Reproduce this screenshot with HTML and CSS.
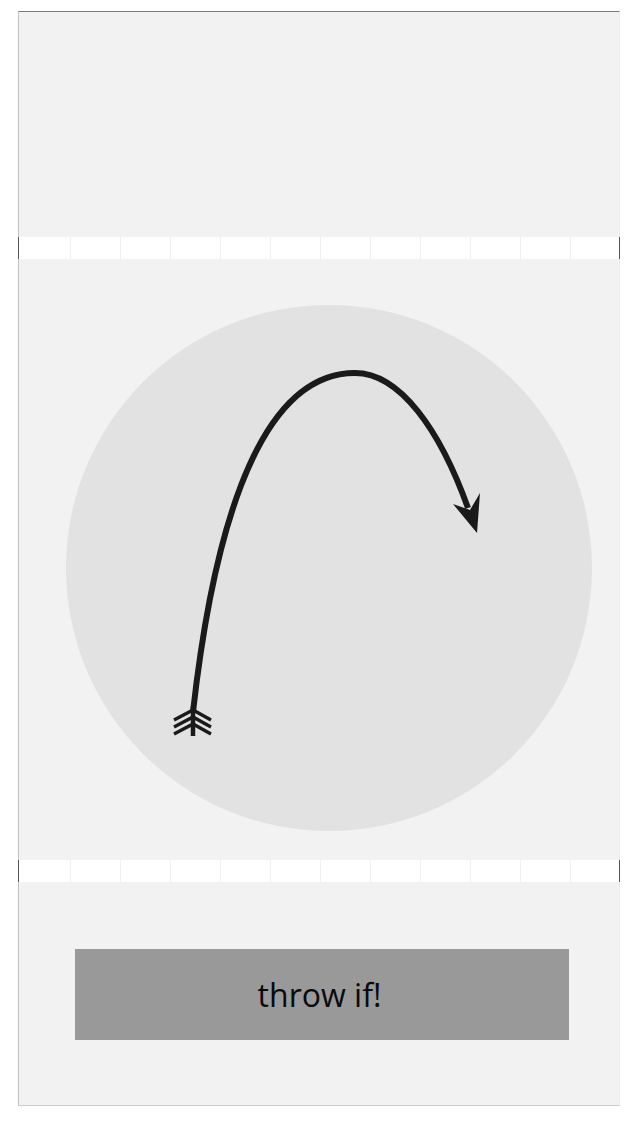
FILE: index.html
```html
<!DOCTYPE html>
<html>
<head>
<meta charset="utf-8">
<link rel="stylesheet" href="styles.css">
</head>
<body>
<div class="frame">
  <div class="panel panel-top"></div>
  <div class="strip">
    <span></span><span></span><span></span><span></span><span></span><span></span><span></span><span></span><span></span><span></span><span></span><span></span>
  </div>
  <div class="panel panel-mid">
    <div class="circle">
      <svg class="arrow" width="526" height="526" viewBox="66 305 526 526" xmlns="http://www.w3.org/2000/svg">
        <path d="M193 712 C 210 560 250 373 355 373 C 400 373 440 430 468 508" fill="none" stroke="#1a1a1a" stroke-width="6" stroke-linecap="butt"/>
        <polygon points="477,533 453,504 470,510 480,493" fill="#1a1a1a"/>
        <path d="M174 720 L193 710 L211 720 M174 727 L193 717 L211 727 M174 734 L193 724 L211 734" fill="none" stroke="#1a1a1a" stroke-width="3.4"/>
        <line x1="193" y1="706" x2="193" y2="736" stroke="#1a1a1a" stroke-width="4.5"/>
      </svg>
    </div>
  </div>
  <div class="strip">
    <span></span><span></span><span></span><span></span><span></span><span></span><span></span><span></span><span></span><span></span><span></span><span></span>
  </div>
  <div class="panel panel-bottom">
    <div class="button">throw if!</div>
  </div>
</div>
</body>
</html>
```

FILE: styles.css
```css
html, body {
  margin: 0;
  padding: 0;
  background: #ffffff;
}

.frame {
  margin: 11px 0 0 18px;
  width: 600px;
  border-top: 1px solid #7a7a7a;
  border-left: 1px solid #c4c4c4;
  border-right: 1px solid #ececec;
  border-bottom: 1px solid #cccccc;
}

.panel {
  background: #f2f2f2;
}

.panel-top {
  height: 225px;
}

.strip {
  height: 22px;
  background: #ffffff;
  display: flex;
  padding-left: 2px;
  overflow: hidden;
  border-left: 1px solid #555;
  margin-left: -1px;
  border-right: 1px solid #555;
  margin-right: -1px;
}

.strip span {
  flex: 0 0 50px;
  height: 100%;
  box-sizing: border-box;
  border-right: 1px solid #f0f0f0;
}

.panel-mid {
  height: 601px;
  box-sizing: border-box;
  padding: 46px 0 0 47px;
}

.circle {
  width: 526px;
  height: 526px;
  border-radius: 50%;
  background: #e2e2e2;
}

.arrow {
  display: block;
}

.panel-bottom {
  height: 223px;
  box-sizing: border-box;
  padding: 67px 0 0 56px;
}

.button {
  width: 494px;
  height: 91px;
  background: #999999;
  display: flex;
  align-items: center;
  justify-content: center;
  font-family: "Open Sans", "DejaVu Sans", sans-serif;
  font-size: 32px;
  color: #0a0a0a;
  padding-right: 5px;
  box-sizing: border-box;
}
```
